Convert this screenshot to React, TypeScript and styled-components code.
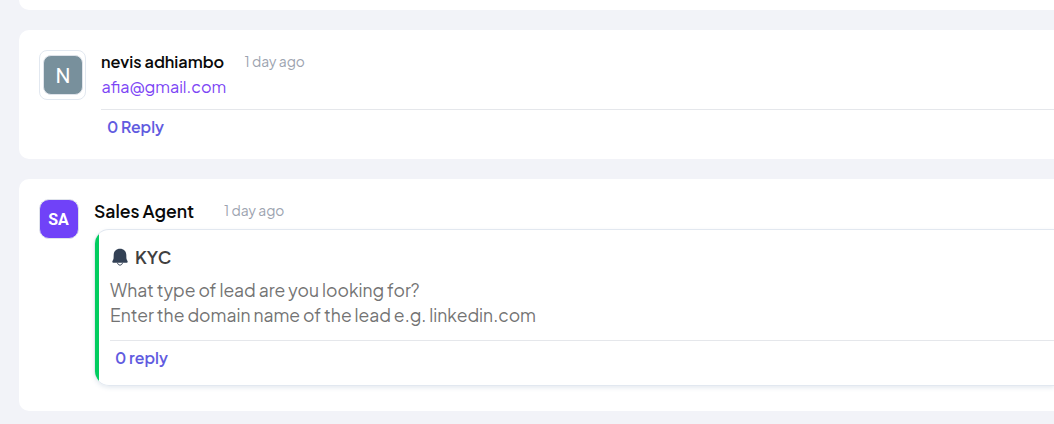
import React from "react";
import styled, { createGlobalStyle } from "styled-components";

const GlobalStyle = createGlobalStyle`
  * { box-sizing: border-box; }
  body {
    margin: 0;
    background: #f2f3f8;
    font-family: "Plus Jakarta Sans", Inter, "Liberation Sans", sans-serif;
    overflow: hidden;
  }
`;

const Feed = styled.main`
  display: flex;
  flex-direction: column;
  gap: 20px;
  height: 424px;
  padding-left: 19px;
  overflow: hidden;
`;

const Card = styled.article<{ $height: number; $gap: number }>`
  display: flex;
  flex: none;
  align-items: flex-start;
  gap: ${(p) => p.$gap}px;
  height: ${(p) => p.$height}px;
  padding: 20px 0 0 20px;
  background: #fff;
  border-radius: 10px 0 0 10px;
`;

const PreviousCard = styled.div`
  flex: none;
  height: 10px;
  background: #fff;
  border-bottom-left-radius: 10px;
`;

const AvatarFrame = styled.div`
  display: flex;
  flex: none;
  align-items: center;
  justify-content: center;
  width: 47px;
  height: 50px;
  border: 1px solid #e2e8f0;
  border-radius: 8px;
`;

const Avatar = styled.div<{ $agent?: boolean }>`
  display: flex;
  flex: none;
  align-items: center;
  justify-content: center;
  width: 40px;
  height: 40px;
  border: 1px solid #dfe3ea;
  border-radius: ${(p) => (p.$agent ? 10 : 8)}px;
  background: ${(p) => (p.$agent ? "#7042f8" : "#78909c")};
  color: #fff;
  font: ${(p) => (p.$agent ? "700 16px Roboto" : "400 21px Roboto")}, sans-serif;
  padding: ${(p) => (p.$agent ? "1px 1px 0 0" : "1px 0 0 1px")};
`;

const Body = styled.div`
  flex: 1;
  min-width: 0;
`;

const Header = styled.header<{ $gap: number }>`
  display: flex;
  align-items: center;
  gap: ${(p) => p.$gap}px;
  height: 24px;
  padding-bottom: 1px;
`;

const Name = styled.span<{ $size: number; $width: number }>`
  width: ${(p) => p.$width}px;
  color: #0a0a0a;
  font-size: ${(p) => p.$size}px;
  font-weight: 600;
  white-space: nowrap;
`;

const Time = styled.time`
  color: #9ca3af;
  font-size: 13.8px;
  font-weight: 400;
`;

const Email = styled.a`
  display: block;
  height: 25px;
  padding-left: 0.5px;
  color: #7c45f5;
  font-size: 16.2px;
  line-height: 25px;
`;

const ReplyBar = styled.footer<{ $inset: number; $top: number }>`
  margin-top: ${(p) => p.$top}px;
  padding: 5px 0 0 ${(p) => p.$inset}px;
  border-top: 1px solid #e5e7eb;
`;

const ReplyLink = styled.a`
  color: #615be0;
  font-size: 15.8px;
  font-weight: 600;
  line-height: 24px;
`;

const Notice = styled.section`
  display: flex;
  height: 157px;
  margin-top: 6px;
  border: 1px solid #e2e8f0;
  border-right: 0;
  border-radius: 15px 0 0 15px;
  box-shadow: 0 2px 4px rgba(100, 130, 170, 0.16);
  overflow: hidden;
`;

const Accent = styled.div`
  flex: none;
  width: 4px;
  background: #00cc5f;
`;

const NoticeContent = styled.div`
  flex: 1;
  padding: 15px 0 0 11px;
`;

const NoticeTitle = styled.h2`
  display: flex;
  align-items: center;
  gap: 6px;
  height: 24px;
  margin: 0 0 9px;
  padding-left: 2px;
  color: #404040;
  font-size: 17.6px;
  font-weight: 600;
`;

const Line = styled.p`
  margin: 0;
  color: #737373;
  font-size: 17.5px;
  line-height: 25px;
  white-space: nowrap;
`;

const Bell = () => (
  <svg width="17" height="18" viewBox="0 0 17 18" aria-hidden="true">
    <path
      d="M8 .7C4.2.7 1.9 3.1 1.7 6.8L1.6 10.3C1.5 11.8.3 12.8.3 13.8c0 .6.4.9 1 .9h13.4c.6 0 1-.3 1-.9 0-1-1.200-2-1.300-3.500L14.3 6.8C14.1 3.1 11.8.7 8 .7Z"
      fill="#334155"
    />
    <path d="M5.500 14.800c.3 1.500 1.200 2.300 2.500 2.300s2.200-.8 2.500-2.300" fill="none" stroke="#334155" strokeWidth="1" />
  </svg>
);

export default function App() {
  return (
    <>
      <GlobalStyle />
      <Feed>
        <PreviousCard />
        <Card $height={129} $gap={15}>
          <AvatarFrame>
            <Avatar>N</Avatar>
          </AvatarFrame>
          <Body>
            <Header $gap={20}>
              <Name $size={16.3} $width={123.5}>nevis adhiambo</Name>
              <Time>1 day ago</Time>
            </Header>
            <Email>afia@gmail.com</Email>
            <ReplyBar $inset={6} $top={10}>
              <ReplyLink>0 Reply</ReplyLink>
            </ReplyBar>
          </Body>
        </Card>
        <Card $height={232} $gap={15}>
          <Avatar $agent>SA</Avatar>
          <Body>
            <Header $gap={30}>
              <Name $size={17.6} $width={100}>Sales Agent</Name>
              <Time>1 day ago</Time>
            </Header>
            <Notice>
              <Accent />
              <NoticeContent>
                <NoticeTitle>
                  <Bell />
                  KYC
                </NoticeTitle>
                <Line>What type of lead are you looking for?</Line>
                <Line>Enter the domain name of the lead e.g. linkedin.com</Line>
                <ReplyBar $inset={5} $top={12}>
                  <ReplyLink>0 reply</ReplyLink>
                </ReplyBar>
              </NoticeContent>
            </Notice>
          </Body>
        </Card>
      </Feed>
    </>
  );
}
